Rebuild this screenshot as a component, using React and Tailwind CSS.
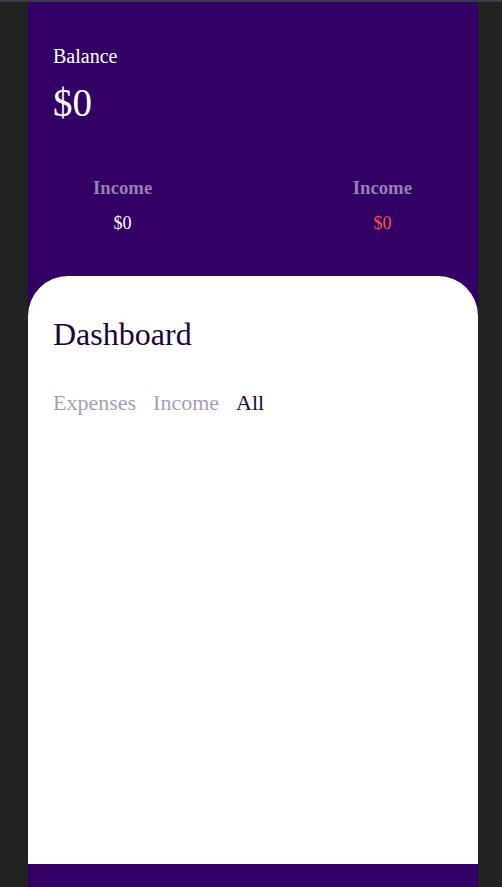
export default function App() {
  const serif = { fontFamily: '"Liberation Serif", "Times New Roman", serif' };
  return (
    <div className="h-[887px] w-full bg-[#222222] border-t-2 border-[#3b3b43] overflow-hidden" style={serif}>
      <div className="mx-[28px] w-[450px] h-[885px] bg-[#330066] flex flex-col">
        <div className="pt-[44px] px-[25px]">
          <div className="text-[20px] leading-none text-white">Balance</div>
          <div className="mt-[17px] text-[39px] leading-none text-white">$0</div>
        </div>
        <div className="mt-[57px] flex justify-between pl-[65px] pr-[66px]">
          <div className="flex flex-col items-center">
            <h3 className="text-[18.72px] font-bold leading-none text-[#997fb2]">Income</h3>
            <div className="mt-[16px] text-[18px] leading-none text-white">$0</div>
          </div>
          <div className="flex flex-col items-center">
            <h3 className="text-[18.72px] font-bold leading-none text-[#997fb2]">Income</h3>
            <div className="mt-[16px] text-[18px] leading-none text-[#f2574b]">$0</div>
          </div>
        </div>
        <div className="mt-[44px] h-[588px] bg-white rounded-t-[40px] px-[25px] pt-[42px]">
          <h1 className="text-[32px] leading-none text-[#1e0638]">Dashboard</h1>
          <div className="mt-[42px] flex gap-[17px] text-[22px] leading-none">
            <span className="text-[#a89db8]">Expenses</span>
            <span className="text-[#a89db8]">Income</span>
            <span className="text-[#1e0638]">All</span>
          </div>
        </div>
      </div>
    </div>
  );
}
